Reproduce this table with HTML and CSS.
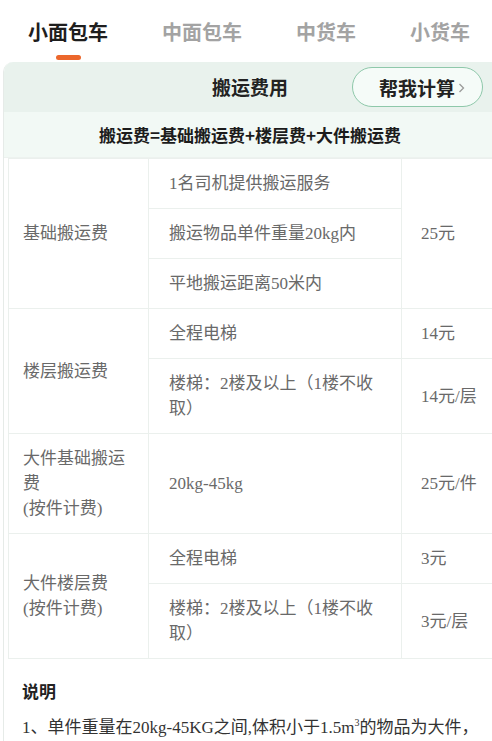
FILE: index.html
```html
<!DOCTYPE html>
<html lang="zh-CN">
<head>
<meta charset="utf-8">
<title>搬运费用</title>
<link rel="stylesheet" href="styles.css">
</head>
<body>
<nav class="tabs">
  <div class="tab active">小面包车<span class="indicator"></span></div>
  <div class="tab">中面包车</div>
  <div class="tab">中货车</div>
  <div class="tab">小货车</div>
</nav>
<section class="card">
  <header class="card-head">
    <span></span>
    <h2 class="title">搬运费用</h2>
    <button class="calc">帮我计算<svg class="chev" width="7" height="12" viewBox="0 0 7 12"><polyline points="1.5,2 5.5,6 1.5,10" fill="none" stroke="#9a9a9a" stroke-width="1.3"/></svg></button>
  </header>
  <div class="formula">搬运费=基础搬运费+楼层费+大件搬运费</div>
  <table class="fees">
    <colgroup><col class="w1"><col class="w2"><col class="w3"></colgroup>
    <tr><td rowspan="3" class="c1">基础搬运费</td><td class="c2">1名司机提供搬运服务</td><td rowspan="3" class="c3">25元</td></tr>
    <tr><td class="c2">搬运物品单件重量20kg内</td></tr>
    <tr><td class="c2">平地搬运距离50米内</td></tr>
    <tr><td rowspan="2" class="c1">楼层搬运费</td><td class="c2">全程电梯</td><td class="c3">14元</td></tr>
    <tr><td class="c2">楼梯：2楼及以上（1楼不收取）</td><td class="c3">14元/层</td></tr>
    <tr><td class="c1">大件基础搬运费<br>(按件计费)</td><td class="c2">20kg-45kg</td><td class="c3">25元/件</td></tr>
    <tr><td rowspan="2" class="c1">大件楼层费<br>(按件计费)</td><td class="c2">全程电梯</td><td class="c3">3元</td></tr>
    <tr><td class="c2">楼梯：2楼及以上（1楼不收取）</td><td class="c3">3元/层</td></tr>
  </table>
  <div class="notes">
    <h3 class="notes-title">说明</h3>
    <p class="note">1、单件重量在20kg-45KG之间,体积小于1.5m<sup>3</sup>的物品为大件，</p>
  </div>
</section>
</body>
</html>
```

FILE: styles.css
```css
html, body {
  margin: 0;
  padding: 0;
  background: #ffffff;
  overflow: hidden;
}
body {
  font-family: "Liberation Serif", "Noto Sans CJK SC", serif;
  color: #333;
}
.tabs {
  display: flex;
  gap: 54px;
  padding: 18px 0 0 28px;
  height: 44px;
  font-family: "Noto Sans CJK SC", sans-serif;
}
.tab {
  position: relative;
  font-size: 20px;
  line-height: 28px;
  font-weight: bold;
  color: #a3a3a3;
  white-space: nowrap;
}
.tab.active {
  color: #1e1e1e;
}
.indicator {
  position: absolute;
  left: 50%;
  top: 37px;
  width: 25px;
  height: 5px;
  margin-left: -12px;
  border-radius: 3px;
  background: #ec672c;
}
.card {
  margin-left: 3px;
  border-left: 1px solid #e6ebe8;
  border-top-left-radius: 10px;
  overflow: hidden;
}
.card-head {
  display: grid;
  grid-template-columns: 1fr auto 1fr;
  align-items: center;
  height: 50px;
  padding: 0 9px 0 13px;
  background: #e9f2ed;
}
.title {
  margin: 0;
  font-family: "Noto Sans CJK SC", sans-serif;
  font-size: 19px;
  font-weight: bold;
  color: #222;
  line-height: 28px;
}
.calc {
  justify-self: end;
  display: flex;
  align-items: center;
  height: 40px;
  width: 131px;
  box-sizing: border-box;
  padding: 0 0 0 26px;
  border: 1.5px solid #8ec8aa;
  border-radius: 20px;
  background: #f5fbf8;
  font-family: "Noto Sans CJK SC", sans-serif;
  font-size: 19px;
  font-weight: bold;
  color: #222;
}
.chev {
  margin-left: 3px;
  margin-top: 2px;
}
.formula {
  height: 45px;
  line-height: 45px;
  padding: 0 9px 0 13px;
  text-align: center;
  background: #f2f9f5;
  font-family: "Noto Sans CJK SC", sans-serif;
  font-size: 17px;
  font-weight: bold;
  color: #1c1c1c;
  border-bottom: 1px solid #edf2ef;
}
.fees {
  margin-left: 4px;
  width: 484px;
  border-collapse: collapse;
  table-layout: fixed;
  font-size: 17px;
  line-height: 25px;
  color: #696969;
}
.w1 { width: 140px; }
.w2 { width: 253px; }
.w3 { width: 91px; }
.fees td {
  border: 1px solid #ebf0ed;
  padding: 12px 14px;
  vertical-align: middle;
}
.fees td.c2 {
  padding-left: 20px;
  padding-right: 20px;
}
.fees td.c3 {
  padding-left: 19px;
  padding-right: 4px;
  border-right: none;
}
.notes {
  padding: 18px 4px 0 18px;
}
.notes-title {
  margin: 0;
  font-family: "Noto Sans CJK SC", sans-serif;
  font-size: 17px;
  font-weight: bold;
  line-height: 28px;
  color: #222;
}
.note {
  margin: 10px 0 0;
  font-size: 17px;
  line-height: 26px;
  color: #333;
}
.note sup {
  font-size: 10px;
  line-height: 0;
}
```
